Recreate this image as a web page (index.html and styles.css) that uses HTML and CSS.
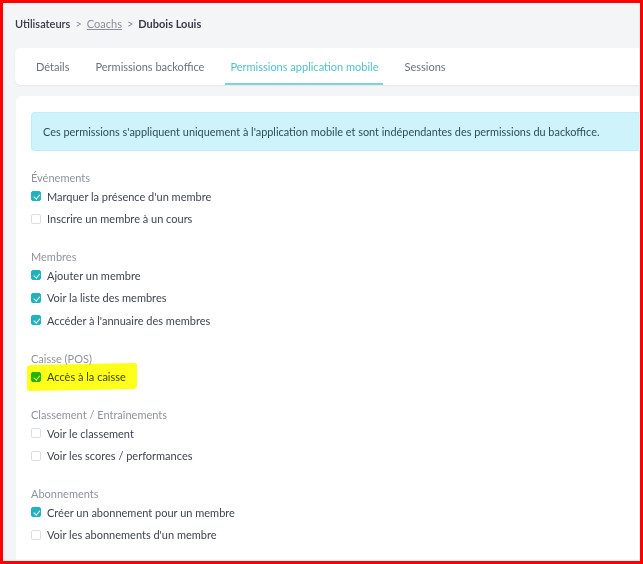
FILE: index.html
```html
<!DOCTYPE html>
<html lang="fr">
<head>
    <meta charset="UTF-8">
    <meta name="viewport" content="width=device-width, initial-scale=1.0">
    <title>Dubois Louis - Permissions</title>
    <link rel="stylesheet" href="styles.css">
</head>
<body>

    <div class="page">
        <!-- fil d'ariane -->
        <div class="breadcrumb">
            <span class="crumb">Utilisateurs</span>
            <span class="sep">&gt;</span>
            <a class="crumb-link" href="#">Coachs</a>
            <span class="sep">&gt;</span>
            <span class="crumb-current">Dubois Louis</span>
        </div>

        <!-- onglets -->
        <div class="tabs">
            <div class="tab">Détails</div>
            <div class="tab">Permissions backoffice</div>
            <div class="tab active">Permissions application mobile</div>
            <div class="tab">Sessions</div>
        </div>

        <div class="card">
            <div class="alert">
                Ces permissions s'appliquent uniquement à l'application mobile et sont indépendantes des permissions du backoffice.
            </div>

            <div class="section">
                <div class="section-title">Événements</div>
                <label class="perm"><span class="box checked"></span>Marquer la présence d'un membre</label>
                <label class="perm"><span class="box"></span>Inscrire un membre à un cours</label>
            </div>

            <div class="section">
                <div class="section-title">Membres</div>
                <label class="perm"><span class="box checked"></span>Ajouter un membre</label>
                <label class="perm"><span class="box checked"></span>Voir la liste des membres</label>
                <label class="perm"><span class="box checked"></span>Accéder à l'annuaire des membres</label>
            </div>

            <div class="section">
                <div class="section-title">Caisse (POS)</div>
                <label class="perm marked"><span class="box checked"></span>Accès à la caisse<span class="marker"></span></label>
            </div>

            <div class="section">
                <div class="section-title">Classement / Entraînements</div>
                <label class="perm"><span class="box"></span>Voir le classement</label>
                <label class="perm"><span class="box"></span>Voir les scores / performances</label>
            </div>

            <div class="section">
                <div class="section-title">Abonnements</div>
                <label class="perm"><span class="box checked"></span>Créer un abonnement pour un membre</label>
                <label class="perm"><span class="box"></span>Voir les abonnements d'un membre</label>
            </div>
        </div>
    </div>

    <div class="frame"></div>

</body>
</html>
```

FILE: styles.css
```css
html, body {
    margin: 0;
    height: 100%;
    overflow: hidden;
}
body {
    font-family: Lato, "Noto Sans", sans-serif;
    background: #f4f5f7;
    color: #3e4451;
}
.page {
    padding: 17px 0 0 15px;
    width: 640px;
}

/* fil d'ariane */
.breadcrumb {
    font-size: 11px;
    line-height: 14px;
    display: flex;
    gap: 5px;
    align-items: center;
}
.crumb {
    color: #353b47;
    font-weight: 600;
}
.sep {
    color: #8a8f99;
}
.crumb-link {
    color: #8a8f99;
    text-decoration: underline;
}
.crumb-current {
    font-weight: bold;
    color: #353b47;
}

/* onglets */
.tabs {
    margin-top: 17px;
    background: white;
    border-radius: 6px 0 0 6px;
    height: 37px;
    display: flex;
    gap: 16px;
    padding-left: 16px;
    box-shadow: 0 1px 2px rgba(0, 0, 0, 0.06);
}
.tab {
    padding: 0 5px;
    font-size: 11px;
    line-height: 37px;
    color: #6b717c;
    box-sizing: border-box;
}
.tab.active {
    color: #4fc2c9;
    border-bottom: 2px solid #7fd2d6;
    height: 37px;
}

.card {
    margin-top: 11px;
    margin-left: 1px;
    background: white;
    border-radius: 6px 0 0 0;
    padding: 16px 0 0 15px;
    height: 480px;
}
.alert {
    background: #cff3fa;
    border: 1px solid #bdeef6;
    border-right: none;
    border-radius: 4px 0 0 4px;
    color: #2e4d57;
    font-size: 10.9px;
    height: 37px;
    line-height: 37px;
    padding-left: 11px;
    white-space: nowrap;
}

.section {
    margin-top: 19px;
}
.section:first-of-type {
    margin-top: 23px;
}
.section-title {
    font-size: 11px;
    line-height: 16px;
    color: #8e939e;
    margin-bottom: -1px;
}
.perm {
    display: flex;
    align-items: center;
    height: 22.5px;
    font-size: 11px;
    color: #3e4451;
    position: relative;
}
.box {
    width: 10px;
    height: 10px;
    box-sizing: border-box;
    border: 1px solid #dadde2;
    border-radius: 2px;
    margin-right: 6px;
    background: white;
    position: relative;
}
.box.checked {
    background: #1fb3be;
    border-color: #1fb3be;
}
.box.checked::after {
    content: "";
    position: absolute;
    left: 2.5px;
    top: 1px;
    width: 2.5px;
    height: 4.5px;
    border: solid white;
    border-width: 0 1.5px 1.5px 0;
    transform: rotate(40deg);
}

/* surlignage au feutre */
.marker {
    position: absolute;
    left: -4px;
    top: -2px;
    width: 110px;
    height: 26px;
    background: #ffff1a;
    mix-blend-mode: multiply;
    border-radius: 3px 2px 4px 3px;
    transform: skewY(-1deg);
}

.frame {
    position: fixed;
    left: 0;
    top: 0;
    width: 643px;
    height: 564px;
    box-sizing: border-box;
    border: 3px solid #ff0000;
    box-shadow: inset -1px -1px 0 #f2f2f2;
    pointer-events: none;
}
```
